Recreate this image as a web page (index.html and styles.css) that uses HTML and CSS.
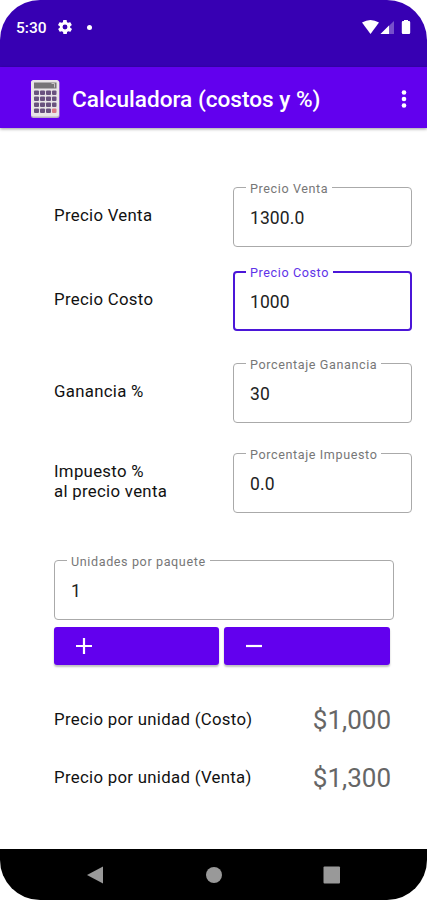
FILE: index.html
```html
<!DOCTYPE html>
<html lang="es">
<head>
<meta charset="utf-8">
<title>Calculadora (costos y %)</title>
<link rel="stylesheet" href="styles.css">
</head>
<body>
<div class="phone">
  <header class="status">
    <span class="time">5:30</span>
    <svg class="gear" width="14" height="14" viewBox="2 2 20 20"><path fill="#fff" fill-rule="evenodd" d="M19.4 13a7.500 7.500 0 0 0 0-2l2.100-1.600a.5.5 0 0 0 .1-.6l-2-3.500a.5.5 0 0 0-.6-.2l-2.500 1a7.300 7.300 0 0 0-1.700-1l-.4-2.600a.5.5 0 0 0-.5-.5h-4a.5.5 0 0 0-.5.500l-.4 2.600a7.300 7.300 0 0 0-1.700 1l-2.500-1a.5.5 0 0 0-.6.200l-2 3.500a.5.5 0 0 0 .1.600L4.600 11a7.500 7.500 0 0 0 0 2l-2.100 1.600a.5.5 0 0 0-.1.600l2 3.500c.1.200.4.300.6.200l2.500-1a7.300 7.300 0 0 0 1.700 1l.4 2.600c0 .3.200.5.500.5h4c.3 0 .5-.2.500-.5l.4-2.600a7.300 7.300 0 0 0 1.700-1l2.500 1c.2.100.5 0 .6-.2l2-3.500a.5.5 0 0 0-.1-.6zM12 15.500a3.500 3.500 0 1 1 0-7 3.500 3.500 0 0 1 0 7z"/></svg>
    <span class="dot"></span>
    <svg class="signals" width="52" height="16" viewBox="0 0 52 16">
      <path fill="#fff" d="M1 3.500Q9.500-1.500 18 3.500L9.500 15z"/>
      <path fill="#7650cb" d="M33 2v13H19.500z"/>
      <path fill="#fff" d="M28 6.500v8.500h-8.500z"/>
      <path fill="#fff" d="M43 2V1h4v1h1q1.200 0 1.200 1.200v10.600q0 1.200-1.200 1.200h-6q-1.200 0-1.200-1.200V3.200q0-1.200 1.200-1.200z"/>
    </svg>
  </header>
  <div class="appbar">
    <svg class="calc" width="30" height="40" viewBox="0 0 30 40">
      <rect x="1" y="1.500" width="28.500" height="37.500" rx="2.500" fill="#b9aec4"/>
      <rect x="1" y="1" width="28" height="36.500" rx="2.500" fill="#e9e5e8"/>
      <rect x="4" y="3.500" width="22.500" height="6" fill="#777477"/>
      <path d="M21.500 4.500h3v4" fill="none" stroke="#c5c1c5"/>
      <g fill="#69527f">
        <rect x="4" y="11.500" width="5" height="4.500" rx="1"/><rect x="10" y="11.500" width="5" height="4.500" rx="1"/><rect x="16" y="11.500" width="5" height="4.500" rx="1"/><rect x="22" y="11.500" width="4.500" height="4.500" rx="1"/>
        <rect x="4" y="17.500" width="5" height="4.500" rx="1"/><rect x="10" y="17.500" width="5" height="4.500" rx="1"/><rect x="16" y="17.500" width="5" height="4.500" rx="1"/><rect x="22" y="17.500" width="4.500" height="4.500" rx="1"/>
        <rect x="4" y="23.500" width="5" height="4.500" rx="1"/><rect x="10" y="23.500" width="5" height="4.500" rx="1"/><rect x="16" y="23.500" width="5" height="4.500" rx="1"/><rect x="22" y="23.500" width="4.500" height="4.500" rx="1"/>
        <rect x="4" y="29.500" width="5" height="4.500" rx="1"/><rect x="10" y="29.500" width="5" height="4.500" rx="1"/><rect x="16" y="29.500" width="5" height="4.500" rx="1"/>
      </g>
      <rect x="22" y="29.500" width="4.500" height="4.500" rx="1" fill="#d77987"/>
    </svg>
    <h1 class="title">Calculadora (costos y %)</h1>
    <svg class="more" width="6" height="20" viewBox="0 0 6 20" fill="#fff"><circle cx="3" cy="3.500" r="2.300"/><circle cx="3" cy="10" r="2.300"/><circle cx="3" cy="16.500" r="2.300"/></svg>
  </div>
  <main class="content">
    <div class="row">
      <span class="name">Precio Venta</span>
      <div class="field"><span class="caption">Precio Venta</span><span class="value">1300.0</span></div>
    </div>
    <div class="row row-cost">
      <span class="name">Precio Costo</span>
      <div class="field focused"><span class="caption">Precio Costo</span><span class="value">1000</span></div>
    </div>
    <div class="row row-gain">
      <span class="name">Ganancia %</span>
      <div class="field"><span class="caption">Porcentaje Ganancia</span><span class="value">30</span></div>
    </div>
    <div class="row row-tax">
      <span class="name">Impuesto %<br>al precio venta</span>
      <div class="field"><span class="caption">Porcentaje Impuesto</span><span class="value">0.0</span></div>
    </div>
    <div class="field units"><span class="caption">Unidades por paquete</span><span class="value">1</span></div>
    <div class="buttons">
      <button class="btn" aria-label="+"><svg width="16" height="16" viewBox="0 0 16 16"><path d="M0 8h16M8 0v16" stroke="#fff" stroke-width="2.200"/></svg></button>
      <button class="btn" aria-label="−"><svg width="16" height="16" viewBox="0 0 16 16"><path d="M0 8h16" stroke="#fff" stroke-width="2.200"/></svg></button>
    </div>
    <div class="total"><span class="name">Precio por unidad (Costo)</span><span class="amount">$1,000</span></div>
    <div class="total"><span class="name">Precio por unidad (Venta)</span><span class="amount">$1,300</span></div>
  </main>
  <nav class="nav">
    <svg width="18" height="18" viewBox="0 0 18 18"><path d="M1 9l16-8.500v17z" fill="#999"/></svg>
    <svg width="18" height="18" viewBox="0 0 18 18"><circle cx="9" cy="9" r="8" fill="#999"/></svg>
    <svg width="18" height="18" viewBox="0 0 18 18"><rect x=".5" y=".5" width="16.500" height="17" rx="1" fill="#999"/></svg>
  </nav>
</div>
</body>
</html>
```
FILE: styles.css
```css
* { box-sizing: border-box; }
body { margin: 0; background: #fff; font-family: Roboto, "Liberation Sans", sans-serif; }
.phone { width: 427px; height: 900px; display: flex; flex-direction: column; overflow: hidden; border-radius: 40px; background: #fff; }
.status { height: 67px; flex: none; background: #3700b3; display: flex; align-items: flex-start; padding: 19px 14px 0 16px; color: #fff; }
.time { width: 31px; font-size: 15.500px; line-height: 19px; font-weight: 500; }
.gear { margin: 1px 0 0 11px; }
.dot { width: 5px; height: 5px; border-radius: 50%; background: #fff; margin: 6px 0 0 15px; }
.signals { margin-left: auto; }
.appbar { height: 61px; flex: none; background: #6200ee; display: flex; align-items: center; padding: 2px 20px 0 30px; box-shadow: 0 1px 3px rgba(0,0,0,.4); color: #fff; }
.title { margin: 3px 0 0 12px; font-size: 22.600px; font-weight: 500; line-height: 28px; }
.more { margin-left: auto; }
.content { flex: 1; padding: 59px 15px 0 54px; }
.row { display: flex; justify-content: space-between; align-items: flex-start; height: 60px; }
.row-cost { margin-top: 24px; }
.row-gain { margin-top: 32px; }
.row-tax { margin-top: 30px; }
.name { font-size: 16.800px; line-height: 20px; letter-spacing: .3px; color: #111; }
.row .name { align-self: center; padding-bottom: 5px; }
.field { position: relative; width: 179px; height: 60px; border: 1px solid #aaa; border-radius: 4px; padding: 19px 16px; }
.focused { border: 2px solid #4b16d8; padding: 18px 15px; }
.caption { position: absolute; left: 12px; top: -7px; padding: 0 4px; background: #fff; font-size: 12.600px; line-height: 16px; letter-spacing: .6px; color: #777; white-space: nowrap; }
.focused .caption { left: 11px; top: -8px; color: #6033e8; }
.value { display: block; font-size: 17.500px; line-height: 22px; letter-spacing: .1px; color: #222; }
.units { width: 340px; margin-top: 47px; }
.buttons { display: flex; gap: 5px; margin-top: 7px; margin-bottom: 35px; }
.btn { width: 165.400px; height: 38px; border: 0; border-radius: 3px; background: #6200ee; box-shadow: 0 2px 2px rgba(0,0,0,.25); padding: 0 22px; display: flex; align-items: center; }
.total { display: flex; justify-content: space-between; align-items: center; height: 40px; margin: 0 21px 18px 0; }
.total .name { padding-bottom: 2px; }
.amount { font-size: 26px; line-height: 40px; color: #666; }
.nav { height: 51px; flex: none; background: #000; display: flex; justify-content: space-between; align-items: center; padding: 0 86px; }
```
